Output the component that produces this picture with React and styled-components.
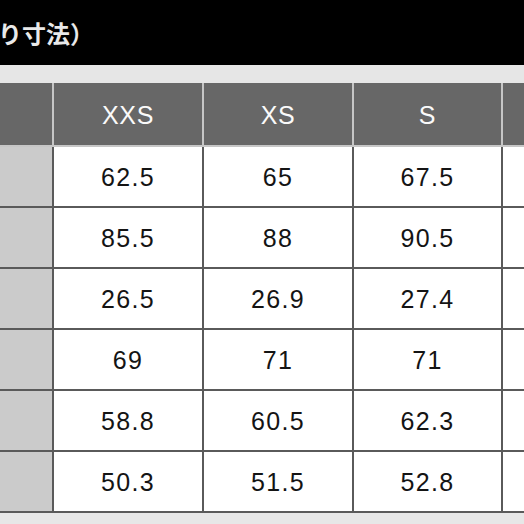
import React from "react";
import styled, { createGlobalStyle } from "styled-components";

const Global = createGlobalStyle`
  html, body { margin: 0; padding: 0; background: #e7e7e7; }
  #root { width: 524px; height: 524px; }
`;

const COLS = "52px 148px 148px 147px 148px";

const Page = styled.div`
  width: 524px;
  height: 524px;
  overflow: hidden;
  background: #e7e7e7;
  display: flex;
  flex-direction: column;
  font-family: "Liberation Sans", Arial, sans-serif;
`;

const TitleBar = styled.div`
  height: 65px;
  flex: none;
  background: #000;
  display: flex;
  align-items: center;
  padding-bottom: 0px;
  box-sizing: border-box;
`;

const Title = styled.span`
  margin-left: -2px;
  color: #e9e9e9;
  font-family: "Noto Sans CJK JP", sans-serif;
  font-weight: 700;
  font-size: 24px;
  line-height: 1;
  white-space: nowrap;
`;

const Band = styled.div`
  height: 18px;
  flex: none;
  background: #e6e6e6;
`;

const Grid = styled.div`
  display: grid;
  grid-template-columns: ${COLS};
  column-gap: 2px;
  row-gap: 2px;
  width: 651px;
  flex: none;
  background: ${(p) => p.$line};
  padding-bottom: 2px;
`;

const HeadCell = styled.div`
  height: 62px;
  background: #676767;
  color: #fafafa;
  font-size: 25px;
  letter-spacing: 0.7px;
  display: flex;
  align-items: center;
  justify-content: center;
  padding-top: 2px;
  box-sizing: border-box;
`;

const Cell = styled.div`
  height: 59px;
  background: ${(p) => (p.$label ? "#cbcbcb" : "#ffffff")};
  color: #141414;
  font-size: 25px;
  letter-spacing: 1.3px;
  display: flex;
  align-items: center;
  justify-content: center;
  padding-top: 1px;
  box-sizing: border-box;
`;

const sizes = ["XXS", "XS", "S", "M"];
const rows = [
  ["62.5", "65", "67.5", ""],
  ["85.5", "88", "90.5", ""],
  ["26.5", "26.9", "27.4", ""],
  ["69", "71", "71", ""],
  ["58.8", "60.5", "62.3", ""],
  ["50.3", "51.5", "52.8", ""],
];

export default function App() {
  return (
    <Page>
      <Global />
      <TitleBar>
        <Title>り寸法）</Title>
      </TitleBar>
      <Band />
      <Grid $line="#c6c6c6">
        <HeadCell />
        {sizes.map((s, i) => (
          <HeadCell key={s}>{i < 3 ? s : ""}</HeadCell>
        ))}
      </Grid>
      <Grid $line="#5a5a5a">
        {rows.map((r, ri) => (
          <React.Fragment key={ri}>
            <Cell $label />
            {r.map((v, ci) => (
              <Cell key={ci}>{v}</Cell>
            ))}
          </React.Fragment>
        ))}
      </Grid>
    </Page>
  );
}
